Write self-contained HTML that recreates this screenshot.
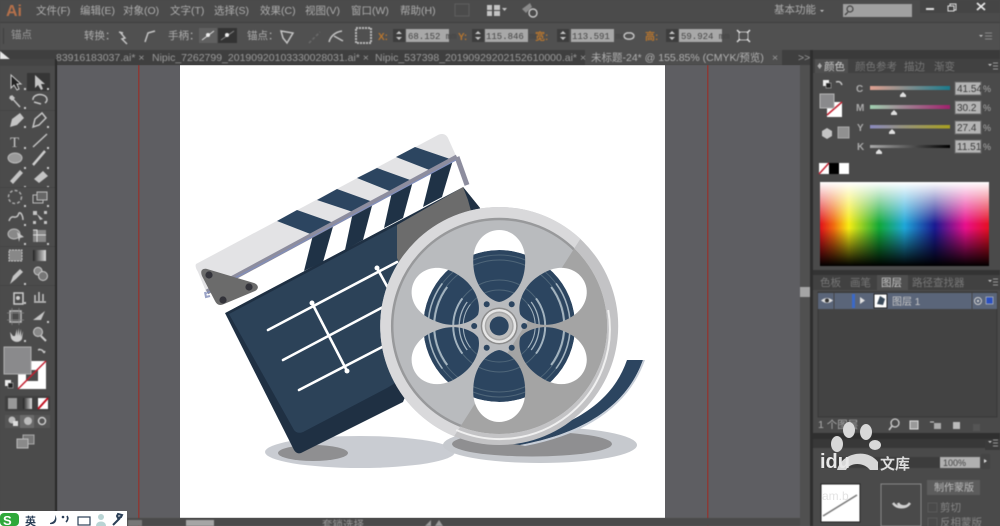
<!DOCTYPE html>
<html lang="zh"><head><meta charset="utf-8"><title>Illustrator</title>
<style>
html,body{margin:0;padding:0;width:1000px;height:526px;overflow:hidden;background:#4a4a4a}
svg{display:block}
text{font-family:"Liberation Sans","Noto Sans CJK SC",sans-serif}
.ui{filter:blur(.5px)}
.m{font-size:10.5px;fill:#adadad}
.t{font-size:10.5px;fill:#9a9a9a}
.v{font-size:9px;fill:#444;font-family:"Liberation Mono",monospace}
.o{font-size:10px;fill:#b8762e;font-weight:bold}
.i{fill:#c4c4c4}
.s{stroke:#c4c4c4;fill:none;stroke-width:1.5}
</style></head><body>
<svg width="1000" height="526" viewBox="0 0 1000 526" xmlns="http://www.w3.org/2000/svg">
<defs>
<linearGradient id="h"><stop offset="0" stop-color="#e0101c"/><stop offset=".08" stop-color="#f06a10"/><stop offset=".17" stop-color="#f7ec14"/><stop offset=".35" stop-color="#12a838"/><stop offset=".5" stop-color="#1fa7d8"/><stop offset=".68" stop-color="#1a1a90"/><stop offset=".86" stop-color="#e8108c"/><stop offset="1" stop-color="#e60f20"/></linearGradient>
<linearGradient id="w" x1="0" y1="0" x2="0" y2="1"><stop offset="0" stop-color="#fff"/><stop offset=".5" stop-color="#fff" stop-opacity="0"/><stop offset=".55" stop-color="#000" stop-opacity="0"/><stop offset="1" stop-color="#000"/></linearGradient>
<linearGradient id="gr"><stop offset="0" stop-color="#222"/><stop offset="1" stop-color="#ddd"/></linearGradient>
<path id="petal" d="M0-24C-7-25-16-32-21-42C-25-50-26-58-26-66C-26-84-14-96 0-96C14-96 26-84 26-66C26-58 25-50 21-42C16-32 7-25 0-24Z"/>
<clipPath id="sp"><circle r="76"/></clipPath>
<clipPath id="lt"><polygon points="138,-176 -98,193 -200,193 -200,-176"/></clipPath>
<clipPath id="wed"><polygon points="0,0 120,-90 120,90"/><polygon points="0,0 -120,-90 -120,90"/></clipPath>
<mask id="holes" maskUnits="userSpaceOnUse" x="-130" y="-130" width="260" height="260">
<rect x="-130" y="-130" width="260" height="260" fill="#fff"/>
<g fill="#000"><use href="#petal"/><use href="#petal" transform="rotate(62)"/><use href="#petal" transform="rotate(118)"/><use href="#petal" transform="rotate(180)"/><use href="#petal" transform="rotate(242)"/><use href="#petal" transform="rotate(298)"/></g>
</mask>
<linearGradient id="c1"><stop offset="0" stop-color="#e0a090"/><stop offset="1" stop-color="#1a7a8c"/></linearGradient>
<linearGradient id="c2"><stop offset="0" stop-color="#a0d0b0"/><stop offset="1" stop-color="#a0206c"/></linearGradient>
<linearGradient id="c3"><stop offset="0" stop-color="#8a8ac0"/><stop offset="1" stop-color="#a8a020"/></linearGradient>
<linearGradient id="c4"><stop offset="0" stop-color="#aaa"/><stop offset="1" stop-color="#000"/></linearGradient>
</defs>

<rect width="1000" height="526" fill="#4a4a4a"/>
<!-- canvas -->
<rect x="57" y="65" width="753" height="461" fill="#5e5e62"/>
<rect x="180" y="65" width="485" height="453" fill="#fff"/>
<rect x="138" y="65" width="1.5" height="461" fill="#8a3a36"/>
<rect x="707" y="65" width="1.5" height="461" fill="#8a3a36"/>

<!-- artwork -->
<g>
<ellipse cx="360" cy="452" rx="95" ry="16" fill="#c9ccd2"/>
<ellipse cx="540" cy="445" rx="97" ry="18" fill="#c6c9ce"/>
<ellipse cx="532" cy="444" rx="80" ry="12.5" fill="#8f8f91"/>
<ellipse cx="313" cy="453" rx="35" ry="8" fill="#8f8f91"/>
<!-- board -->
<path d="M403 402L480 208L463 187L225 313L294 450C296 453 298 454 301 453Z" fill="#1f3043"/>
<path d="M229 314L463 190L479 212L420 368L387 388L305 431C300 434 296 433 294 430Z" fill="#2c4258"/>
<path d="M397 225L463 187L480 208L430 330L397 258Z" fill="#6c6c6c"/>
<path d="M463 187L480 208L474 222L468 200Z" fill="#1f3043"/>
<g stroke="#fff" stroke-width="2.6" fill="none" stroke-linecap="round">
<path d="M268 330L397 262"/><path d="M283 360L385 306"/><path d="M299 390L386 345"/>
<path d="M312 303L347 371"/><path d="M377 268L388 288"/>
</g>
<circle cx="312" cy="303" r="2.5" fill="#fff"/><circle cx="347" cy="371" r="2.5" fill="#fff"/><circle cx="377" cy="268" r="2.5" fill="#fff"/>
<!-- clapper bar -->
<path d="M196 264L438 135C442 133 446 134 448 138L457 158L207 294L198 272C196 269 195 266 196 264Z" fill="#e3e3e5"/>
<path d="M207 293L457 158L467 185L463 187L225 313L218 300Z" fill="#fff"/>
<g fill="#2c4560">
<path d="M277 221L297 210L334 223L313 235Z"/><path d="M317 200L337 189L373 202L353 212Z"/>
<path d="M357 178L377 168L413 181L392 192Z"/><path d="M396 157L415 147L453 160L432 171Z"/>
</g>
<g fill="#1f3246">
<path d="M313 235L334 223L323 262L304 271Z"/><path d="M353 212L373 202L363 240L345 250Z"/>
<path d="M392 192L413 181L403 218L384 228Z"/><path d="M432 171L453 160L442 197L423 207Z"/>
</g>
<path d="M207 292L457 157" stroke="#8d8d9e" stroke-width="5" fill="none"/>
<path d="M457 157L467 185" stroke="#8d8d9e" stroke-width="5" fill="none"/>
<path d="M205 294L456 160" stroke="#7f8fc0" stroke-width="1" fill="none"/>
<path d="M205 292L206 297L210 296" stroke="#9aa3c6" stroke-width="2" fill="none"/>
<!-- triangle -->
<path d="M207 269L254 283C259 285 259 289 255 291L224 304C220 306 217 305 215 301L202 276C200 271 202 268 207 269Z" fill="#6b6b6b"/>
<g fill="#33333a"><circle cx="209" cy="275" r="3.6"/><circle cx="249" cy="287" r="3.6"/><circle cx="223" cy="300" r="3.6"/></g>
<!-- film tail -->
<path d="M627 360L643 360C628 402 590 432 520 445L505 443C560 430 610 410 627 360Z" fill="#2c4560"/>
<path d="M643 360L645 360C630 403 590 434 525 446L520 445C590 432 628 402 643 360Z" fill="#c7ced8"/>
<!-- reel -->
<g transform="translate(499.2 326)">
<circle r="119" fill="#c3c3c5"/>
<circle r="119" fill="#d9d9db" clip-path="url(#lt)"/>
<circle r="108" fill="#fff"/>
<g clip-path="url(#sp)">
<circle r="76" fill="#2c4560"/>
<g fill="none" stroke="#4f6679" stroke-width="1"><circle r="71"/><circle r="66"/><circle r="46"/><circle r="36"/></g>
<g fill="none" stroke="#a3b3bf" clip-path="url(#wed)"><circle r="71" stroke-width="1.6"/><circle r="65" stroke-width="2"/><circle r="46" stroke-width="2"/><circle r="40" stroke-width="1.3"/><circle r="36" stroke-width="1"/></g>
</g>
<g mask="url(#holes)">
<circle r="108" fill="#a4a4a4"/>
<circle r="108" fill="#b9bbbe" clip-path="url(#lt)"/>
<circle r="107" fill="none" stroke="#98999b" stroke-width="2.5" clip-path="url(#lt)"/>
</g>
<path d="M109 -16A110 110 0 0 1 -43 104" fill="none" stroke="#f0f0f0" stroke-width="2"/>
<g fill="#2c4560"><circle cx="25" r="3"/><circle cx="-25" r="3"/><circle cx="12.5" cy="-21.7" r="3"/><circle cx="-12.5" cy="-21.7" r="3"/><circle cx="12.5" cy="21.7" r="3"/><circle cx="-12.5" cy="21.7" r="3"/></g>
<circle r="18.5" fill="#8c8c8c"/>
<circle r="17" fill="#e6e6e6"/>
<circle r="14.5" fill="#a8a8a8"/>
<circle r="13" fill="#bdbdbd"/>
<circle r="9.5" fill="#2c4560"/>
</g>
</g>

<g class="ui">
<!-- menu -->
<rect width="1000" height="22" fill="#4b4b4b"/>
<rect y="22" width="1000" height="28" fill="#505050"/>
<rect y="22" width="1000" height="1" fill="#3f3f3f"/>
<text x="6" y="16" font-size="16" font-weight="bold" fill="#b5704a">Ai</text>
<g class="m">
<text x="36" y="14">文件(F)</text><text x="80" y="14">编辑(E)</text><text x="123" y="14">对象(O)</text><text x="170" y="14">文字(T)</text><text x="214" y="14">选择(S)</text><text x="260" y="14">效果(C)</text><text x="305" y="14">视图(V)</text><text x="351" y="14">窗口(W)</text><text x="400" y="14">帮助(H)</text>
<text x="774" y="13" font-size="10.5">基本功能</text>
</g>
<rect x="455" y="4" width="14" height="12" fill="none" stroke="#5e5e5e"/>
<g class="i"><rect x="487" y="5" width="5" height="5"/><rect x="494" y="5" width="6" height="5"/><rect x="487" y="11" width="5" height="5"/><rect x="494" y="11" width="6" height="5"/><path d="M502 8h5l-2.500 3z"/></g>
<circle cx="533" cy="13" r="4" fill="none" stroke="#c8c8c8" stroke-width="1.400"/><path d="M522 9L530 3L532 7L526 13Z" fill="#8a8a8a"/>
<path d="M820 10h4l-2 2z" class="i"/>
<rect x="843" y="4" width="69" height="13" fill="#a0a0a0"/>
<circle cx="850" cy="9" r="3" fill="none" stroke="#444" stroke-width="1.200"/><path d="M848 12L845 15" stroke="#444" stroke-width="1.300"/>
<rect x="920" y="0" width="80" height="13" fill="#454545"/>
<rect x="926" y="8" width="8" height="2" fill="#e0e0e0"/>
<rect x="950" y="4" width="6" height="6" fill="none" stroke="#e0e0e0"/><rect x="948" y="6" width="6" height="5" fill="#454545" stroke="#e0e0e0"/>
<path d="M977 3L985 10M985 3L977 10" stroke="#e8e8e8" stroke-width="1.800"/>

<!-- control bar -->
<rect x="3" y="28" width="1" height="16" fill="#3f3f3f"/>
<text class="t" x="11" y="38" font-size="10">锚点</text>
<text class="m" x="84" y="39">转换：</text>
<path d="M120 32L125 38L122 39L127 44M119 32l4 1" class="s"/>
<path d="M145 42L148 33L155 31" class="s" stroke-width="2"/>
<text class="m" x="168" y="39">手柄：</text>
<rect x="199" y="28" width="18" height="15" fill="#606060"/><rect x="218" y="28" width="19" height="15" fill="#333"/>
<path d="M202 40L214 31" stroke="#ddd"/><circle cx="208" cy="35" r="2" fill="#eee"/>
<path d="M221 40L234 31" stroke="#888"/><circle cx="227" cy="35" r="2" fill="#eee"/>
<text class="m" x="247" y="39">锚点：</text>
<path d="M281 31L293 33L287 43L283 38Z" class="s"/>
<path d="M309 43L320 32" stroke="#6a6a6a" stroke-width="1.500" stroke-dasharray="3 2"/>
<path d="M329 42C331 35 336 32 342 31M334 36L343 41" class="s"/>
<rect x="356" y="28" width="15" height="15" fill="none" stroke="#bbb" stroke-dasharray="2 1" stroke-width="2"/>
<text class="o" x="378" y="40">X:</text>
<rect x="393" y="29" width="12" height="13" fill="#3d3d3d"/><path d="M396 34l3-3 3 3zM396 37l3 3 3-3z" class="i"/>
<rect x="406" y="29" width="43" height="13" fill="#a8a8a8"/><text class="v" x="408" y="39">68.152 mm</text>
<text class="o" x="458" y="40">Y:</text>
<rect x="472" y="29" width="12" height="13" fill="#3d3d3d"/><path d="M475 34l3-3 3 3zM475 37l3 3 3-3z" class="i"/>
<rect x="485" y="29" width="43" height="13" fill="#a8a8a8"/><text class="v" x="486" y="39">115.846 mm</text>
<text class="o" x="535" y="40">宽:</text>
<rect x="557" y="29" width="12" height="13" fill="#3d3d3d"/><path d="M560 34l3-3 3 3zM560 37l3 3 3-3z" class="i"/>
<rect x="571" y="29" width="43" height="13" fill="#a8a8a8"/><text class="v" x="572" y="39">113.591 mm</text>
<path d="M624 36a4 3.500 0 0 1 5-3M634 36a4 3.500 0 0 1-5 3M624 36a4 3.500 0 0 0 5 3M634 36a4 3.500 0 0 0-5-3" class="s"/>
<text class="o" x="645" y="40">高:</text>
<rect x="666" y="29" width="12" height="13" fill="#3d3d3d"/><path d="M669 34l3-3 3 3zM669 37l3 3 3-3z" class="i"/>
<rect x="679" y="29" width="43" height="13" fill="#a8a8a8"/><text class="v" x="681" y="39">59.924 mm</text>
<rect x="739" y="32" width="9" height="8" fill="none" stroke="#bbb"/><path d="M737 30l3 3M750 30l-3 3M737 42l3-3M750 42l-3-3" stroke="#ddd" stroke-width="1.500"/>
<path d="M979 35h4l-2 2z" class="i"/><path d="M985 33h7M985 36h7M985 39h7" stroke="#888"/>

<!-- tabs -->
<rect y="50" width="813" height="15" fill="#3f3f3f"/>
<rect x="585" y="50" width="197" height="15" fill="#4e4e4e"/>
<g class="t">
<text x="56" y="61">83916183037.ai* ×</text>
<text x="152" y="61">Nipic_7262799_20190920103330028031.ai* ×</text>
<text x="375" y="61">Nipic_537398_20190929202152610000.ai* ×</text>
<text x="591" y="61" fill="#b0b0b0">未标题-24* @ 155.85% (CMYK/预览)</text>
<text x="772" y="61">×</text>
<text x="798" y="61">&gt;&gt;</text>
</g>
<path d="M0 51L0 64L4 61L7 67L9 66L7 60L11 60Z" fill="#e8e8e8"/>

<!-- left toolbar -->
<rect y="65" width="55" height="461" fill="#4b4b4b"/>
<rect x="0" y="59" width="55" height="7" fill="#444"/>
<rect x="55" y="59" width="2" height="467" fill="#2a2a2a"/>
<rect x="27" y="73" width="23" height="18" fill="#363636"/>
<path d="M11 75L11 88L14 85L17 90L19 89L17 84L21 84Z" fill="#222" stroke="#ccc"/>
<path d="M35 75L35 88L38 85L41 90L43 89L41 84L45 84Z" class="i"/>
<path d="M10 96L20 107M12 96l2 2-2 2-2-2z" class="s"/>
<path d="M33 100a7 5 0 1 1 12 3M41 104l-7-2" class="s"/>
<path d="M10 127L12 119L20 113L24 118L17 125Z" class="i"/>
<path d="M33 127L35 119L42 113L46 118L39 125Z" class="s"/>
<text x="10" y="147" font-size="15" fill="#c4c4c4" style="font-family:'Liberation Serif',serif">T</text>
<path d="M33 147L47 134" class="s" stroke-width="1.800"/>
<ellipse cx="15" cy="158" rx="7" ry="5" fill="#999" stroke="#bbb"/>
<path d="M33 165L45 151" stroke="#ccc" stroke-width="2.500"/>
<path d="M10 181L20 170L23 173L13 184Z" class="i"/>
<path d="M34 179L43 171L48 176L39 183Z" class="i"/>
<circle cx="15" cy="197" r="6.500" fill="none" stroke="#aaa" stroke-dasharray="3 2" stroke-width="1.500"/>
<rect x="33" y="195" width="10" height="8" fill="none" stroke="#bbb"/><rect x="37" y="192" width="10" height="8" fill="#666" stroke="#bbb"/>
<path d="M9 221C12 212 16 222 19 213C21 212 23 216 23 220" class="s" stroke-width="2.400"/>
<g fill="#c4c4c4"><rect x="33" y="211" width="4" height="4"/><rect x="44" y="211" width="3" height="3"/><rect x="33" y="221" width="3" height="3"/><rect x="44" y="221" width="3" height="3"/><path d="M37 214l6 5-3 1z"/></g>
<ellipse cx="14" cy="234" rx="6" ry="5" fill="#888" stroke="#bbb"/><path d="M17 232l7 5-4 1-1 4z" class="i"/>
<rect x="33" y="230" width="13" height="12" fill="#888"/><path d="M33 230h4v12M33 235h13" stroke="#ddd" fill="none"/>
<rect x="9" y="250" width="13" height="11" fill="#888" stroke="#ccc" stroke-dasharray="2 1"/>
<rect x="33" y="250" width="13" height="11" fill="url(#gr)"/>
<path d="M10 284L13 276L20 269L23 272L16 279Z" class="i"/>
<circle cx="38" cy="271" r="4" fill="#888" stroke="#ccc"/><circle cx="43" cy="276" r="4.500" fill="#777" stroke="#ccc"/>
<rect x="14" y="293" width="9" height="11" fill="none" stroke="#ccc" stroke-width="1.500"/><circle cx="18" cy="298" r="2" fill="#ccc"/>
<path d="M34 302h12M35 301v-6M39 301v-9M43 301v-7" class="s"/>
<rect x="10" y="311" width="11" height="11" fill="none" stroke="#bbb" stroke-width="1.500"/><path d="M7 313h17M7 320h17M12 308v17M19 308v17" stroke="#888" stroke-width=".7"/>
<path d="M33 320L45 311L41 320Z" class="i"/>
<path d="M10 332L11 338C13 343 20 343 22 339L23 331L21 337V329L19 336V328L17 336V329L15 336L13 336Z" fill="#ccc"/>
<circle cx="38" cy="332" r="4.500" fill="#888" stroke="#ccc"/><path d="M41 336L46 341" stroke="#ccc" stroke-width="2"/>
<g fill="#ccc"><path d="M24 88h2v2h-2zM47 88h2v2h-2zM24 107h2v2h-2zM24 126h2v2h-2zM47 126h2v2h-2zM24 147h2v2h-2zM47 147h2v2h-2zM24 167h2v2h-2zM47 167h2v2h-2zM24 186h2v2h-2zM47 186h2v2h-2zM24 205h2v2h-2zM47 205h2v2h-2zM24 224h2v2h-2zM24 243h2v2h-2zM47 243h2v2h-2zM24 283h2v2h-2zM24 302h2v2h-2zM47 321h2v2h-2zM24 340h2v2h-2z"/></g>
<g stroke="#444" stroke-width="1"><path d="M0 110.500h55M0 187.500h55M0 246.500h55M0 285.500h55"/></g>

<!-- fill stroke -->
<rect x="18" y="361" width="28" height="28" fill="#fff"/>
<rect x="26" y="370" width="12" height="11" fill="#4a4a4a"/>
<path d="M18 389L46 361" stroke="#c22030" stroke-width="1.500"/>
<rect x="4" y="347" width="27" height="27" fill="#8a8a8c" stroke="#b0b0b0"/>
<path d="M38 350c3-1 5 0 6 3M38 350l2-1M44 353l1-2" class="s" stroke-width="1"/>
<rect x="5" y="380" width="6" height="6" fill="#eee"/><rect x="8" y="383" width="5" height="5" fill="#222" stroke="#ccc" stroke-width=".5"/>
<rect x="5" y="396" width="45" height="15" fill="#3f3f3f"/>
<rect x="8" y="398" width="9" height="11" fill="#999"/>
<rect x="23" y="398" width="9" height="11" fill="url(#gr)"/>
<rect x="38" y="398" width="10" height="11" fill="#fff"/><path d="M38 409L48 398" stroke="#c01020" stroke-width="2"/>
<rect x="5" y="415" width="45" height="13" fill="#555"/><rect x="20" y="415" width="14" height="13" fill="#6a6a6a"/>
<circle cx="12" cy="420" r="3.500" fill="#bbb"/><rect x="13" y="421" width="5" height="5" fill="#ddd"/>
<circle cx="28" cy="421" r="4" fill="#bbb"/><circle cx="42" cy="421" r="3.500" fill="none" stroke="#ccc" stroke-width="1.500"/>
<rect x="23" y="435" width="11" height="9" fill="#777" stroke="#aaa"/><rect x="17" y="439" width="11" height="9" fill="#8a8a8a" stroke="#bbb"/>

<!-- status bottom -->
<rect x="127" y="518" width="683" height="8" fill="#4a4a4a"/>
<rect x="128" y="520" width="14" height="6" fill="#777"/>
<rect x="186" y="520" width="28" height="6" fill="#a5a5a5"/>
<text class="t" x="322" y="528" font-size="9">套锁选择</text>
<path d="M425 526l6-6v6zM435 526l4-6 4 6z" fill="#999"/>

<!-- right scroll -->
<rect x="800" y="65" width="12" height="461" fill="#505050"/>
<rect x="800" y="287" width="12" height="10" fill="#a5a5a5"/>
<rect x="810" y="50" width="3" height="476" fill="#2e2e2e"/>

<!-- right panel -->
<rect x="813" y="50" width="187" height="476" fill="#4a4a4a"/>
<rect x="813" y="50" width="187" height="9" fill="#3a3a3a"/>
<rect x="813" y="59" width="187" height="14" fill="#414141"/>
<rect x="815" y="59" width="33" height="14" fill="#4f4f4f"/>
<text x="817" y="69" class="m" font-size="8">♦</text>
<text class="m" x="824" y="70" style="fill:#ccc">颜色</text>
<text class="t" x="855" y="70" style="fill:#777">颜色参考</text>
<text class="t" x="904" y="70" style="fill:#777">描边</text>
<text class="t" x="934" y="70" style="fill:#777">渐变</text>
<path d="M988 64h4l-2 2z" class="i"/><path d="M993 63h5M993 66h5M993 69h5" stroke="#999"/>
<rect x="823" y="80" width="6" height="6" fill="#eee"/><rect x="826" y="83" width="5" height="5" fill="#222" stroke="#ccc" stroke-width=".5"/>
<path d="M836 82c3-1 5 0 6 3" class="s" stroke-width="1"/>
<rect x="827" y="102" width="15" height="15" fill="#fff"/><path d="M827 115L842 102" stroke="#c22030" stroke-width="1.500"/>
<rect x="820" y="94" width="14" height="14" fill="#8a8a8c" stroke="#b5b5b5"/>
<path d="M827 128l5 3v5l-5 3-5-3v-5z" class="i"/><rect x="838" y="127" width="11" height="11" fill="#909090" stroke="#aaa"/>

<g font-size="10" fill="#aaa" font-weight="bold"><text x="856" y="92">C</text><text x="856" y="111">M</text><text x="857" y="131">Y</text><text x="857" y="150">K</text></g>
<rect x="870" y="86" width="80" height="4" fill="url(#c1)"/>
<rect x="870" y="105" width="80" height="4" fill="url(#c2)"/>
<rect x="870" y="125" width="80" height="3.500" fill="url(#c3)"/>
<rect x="870" y="145" width="80" height="3" fill="url(#c4)"/>
<g fill="#e0e0e0"><path d="M903 92l3 3v2h-6v-2z"/><path d="M894 110l3 3v2h-6v-2z"/><path d="M892 129l3 3v2h-6v-2z"/><path d="M879 149l3 3v2h-6v-2z"/></g>
<g fill="#b4b4b4" stroke="#6a6a6a"><rect x="955" y="82" width="26" height="13"/><rect x="955" y="101" width="26" height="13"/><rect x="955" y="121" width="26" height="13"/><rect x="955" y="140" width="26" height="13"/></g>
<g class="v" style="font-size:10px;fill:#3a3a3a"><text x="957" y="92">41.54</text><text x="957" y="111">30.2</text><text x="957" y="131">27.4</text><text x="957" y="150">11.51</text></g>
<g font-size="9" fill="#aaa"><text x="983" y="92">%</text><text x="983" y="111">%</text><text x="983" y="131">%</text><text x="983" y="150">%</text></g>
<rect x="819" y="163" width="10" height="11" fill="#fff"/><path d="M819 174L829 163" stroke="#c22030" stroke-width="1.500"/>
<rect x="829" y="163" width="10" height="11" fill="#000"/><rect x="839" y="163" width="10" height="11" fill="#fff"/>
<rect x="820" y="182" width="169" height="84" fill="url(#h)"/>
<rect x="820" y="182" width="169" height="84" fill="url(#w)"/>

<!-- layers -->
<rect x="813" y="270" width="187" height="5" fill="#333"/>
<rect x="813" y="275" width="187" height="15" fill="#414141"/>
<rect x="877" y="275" width="31" height="15" fill="#4f4f4f"/>
<text class="t" x="820" y="286" style="fill:#777">色板</text><text class="t" x="850" y="286" style="fill:#777">画笔</text>
<text class="m" x="881" y="286" style="fill:#ccc">图层</text><text class="t" x="912" y="286" style="fill:#777">路径查找器</text>
<path d="M988 280h4l-2 2z" class="i"/><path d="M993 279h5M993 282h5M993 285h5" stroke="#999"/>
<rect x="818" y="292" width="179" height="125" fill="#434343" stroke="#383838"/>
<rect x="818" y="293" width="179" height="16" fill="#5a6579"/>
<path d="M834 293v16M972 293v16" stroke="#454545"/>
<path d="M821 300.500q6-5 12 0q-6 5-12 0z" fill="#ddd"/><circle cx="827" cy="300.500" r="2" fill="#333"/>
<rect x="852" y="294" width="3" height="14" fill="#3a69c8"/>
<path d="M860 297l5 3.500-5 3.500z" fill="#e0e0e0"/>
<rect x="874" y="294" width="13" height="14" fill="#fff" stroke="#222"/><path d="M877 304l3-8 5 3-2 6z" fill="#3a4a5a"/>
<text class="m" x="892" y="305" style="fill:#c8c8c8;font-size:10px">图层 1</text>
<circle cx="978" cy="301" r="3.500" fill="none" stroke="#ccc"/><circle cx="978" cy="301" r="1.200" fill="#ccc"/>
<rect x="986" y="297" width="7" height="7" fill="#2a50c0" stroke="#ccc" stroke-width=".6"/>
<text class="m" x="818" y="428">1 个图层</text>
<circle cx="895" cy="423" r="4" fill="none" stroke="#ccc" stroke-width="1.300"/><path d="M892 426l-3 4" stroke="#ccc" stroke-width="1.500"/>
<rect x="910" y="421" width="8" height="8" fill="#999" stroke="#ddd"/>
<rect x="934" y="423" width="7" height="6" fill="#aaa"/><path d="M930 422h4" stroke="#ccc"/>
<rect x="953" y="422" width="7" height="7" fill="#bbb"/>
<rect x="973" y="424" width="7" height="7" fill="#555"/>

<!-- transparency -->
<rect x="813" y="433" width="187" height="6" fill="#2f2f2f"/>
<rect x="813" y="439" width="187" height="9" fill="#383838"/>
<rect x="985" y="440" width="15" height="10" fill="#3a3a3a"/>
<path d="M988 441h4l-2 2z" class="i"/><path d="M993 440h5M993 443h5M993 446h5" stroke="#999"/>
<rect x="822" y="457" width="118" height="11" fill="#3c3c3c"/>
<rect x="940" y="457" width="40" height="11" fill="#b0b0b0"/>
<rect x="981" y="454" width="9" height="15" fill="#444"/><path d="M984 459l3 2-3 2z" fill="#ddd"/>
<text x="943" y="466" font-size="9" fill="#444">100%</text>
<rect x="821" y="484" width="39" height="38" fill="#fff" stroke="#222"/>
<path d="M823 516L857 495" stroke="#777" stroke-width="1.500"/>
<rect x="881" y="484" width="40" height="42" fill="none" stroke="#888"/>
<path d="M893 503a10 9 0 0 0 17 0M898 503a6 5 0 0 0 8 3" stroke="#d0d0d0" stroke-width="2.500" fill="none"/>
<rect x="927" y="480" width="53" height="15" fill="#5c5c5c"/>
<text x="954" y="491" fill="#bdbdbd" text-anchor="middle" style="font-size:10px">制作蒙版</text>
<rect x="928" y="503" width="9" height="9" fill="none" stroke="#5a5a5a"/><text class="t" x="940" y="511" style="fill:#888">剪切</text>
<rect x="928" y="518" width="9" height="9" fill="none" stroke="#5a5a5a"/><text class="t" x="940" y="526" style="fill:#888">反相蒙版</text>
</g>

<!-- watermark -->
<g fill="#d8d8d8">
<ellipse cx="849" cy="430" rx="6" ry="8"/><ellipse cx="866" cy="432" rx="6" ry="8"/><ellipse cx="837" cy="444" rx="6" ry="8"/>
<ellipse cx="875" cy="445" rx="6" ry="5"/>
<path d="M837 470C842 452 868 448 878 462V470H870C864 462 850 462 846 470Z"/>
</g>
<text x="820" y="468" font-size="20" font-weight="bold" fill="#e8e8e8">idu</text>
<text x="880" y="469" font-size="15" font-weight="bold" fill="#dcdcdc">文库</text>
<text x="822" y="500" font-size="12" fill="#ddd" opacity=".8">am.b</text>

<!-- IME -->
<rect x="0" y="511" width="127" height="15" fill="#fff"/>
<rect x="0" y="513" width="19" height="13" rx="4" fill="#2fa83a"/>
<text x="3" y="525" font-size="13" font-weight="bold" fill="#fff">S</text>
<text x="25" y="525" font-size="11" fill="#2b3f57" font-weight="bold">英</text>
<path d="M50 523C54 522 56 519 55 515C58 519 56 525 50 524Z" fill="#2b3f57"/>
<circle cx="63" cy="517" r="1.300" fill="#2b3f57"/><path d="M67 516q2 3-1 6" stroke="#2b3f57" stroke-width="1.600" fill="none"/>
<rect x="78" y="517" width="12" height="8" fill="#fff" stroke="#2b3f57" stroke-width="1.200"/>
<circle cx="101" cy="517" r="3" fill="#b9d4d4"/><path d="M96 526c0-6 10-6 10 0z" fill="#b9d4d4"/>
<path d="M113 525L120 518M118 514l4 1-1 2-3 1-1-2z" stroke="#2b3f57" stroke-width="2" fill="none"/>
</svg>
</body></html>
